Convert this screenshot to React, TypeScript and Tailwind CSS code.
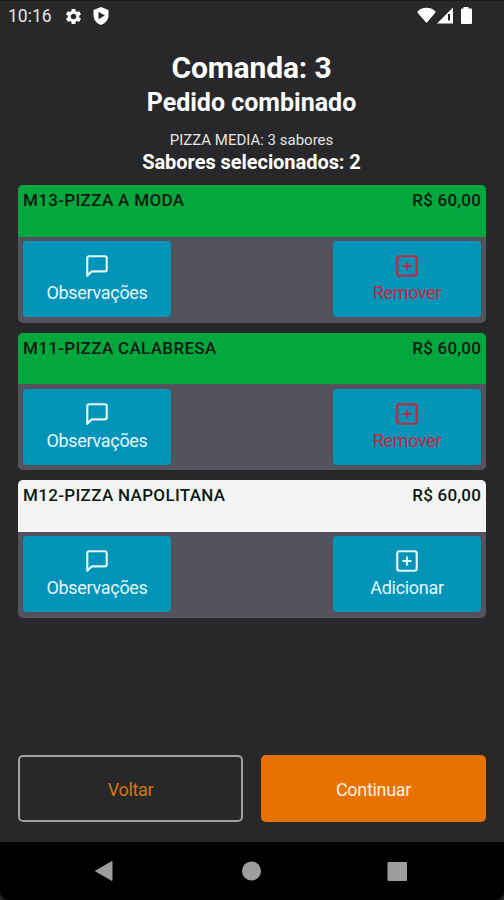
import React from 'react';

interface Flavor {
  id: number;
  name: string;
  price: string;
  selected: boolean;
}

const flavors: Flavor[] = [
  { id: 1, name: 'M13-PIZZA A MODA', price: 'R$ 60,00', selected: true },
  { id: 2, name: 'M11-PIZZA CALABRESA', price: 'R$ 60,00', selected: true },
  { id: 3, name: 'M12-PIZZA NAPOLITANA', price: 'R$ 60,00', selected: false },
];

const StatusBar: React.FC = () => (
  <div className="flex h-8 items-center justify-between border-t border-[#1b1b1c] pb-px pl-2 pr-[32px] text-white">
    <div className="flex items-center">
      <span className="w-[56px] text-[17.5px] leading-[30px] text-[#e4e4e4]">10:16</span>
      <svg className="h-[19px] w-[19px]" viewBox="0 0 24 24" fill="currentColor">
        <path d="M19.14 12.94c.04-.3.06-.61.06-.94 0-.32-.02-.64-.07-.94l2.03-1.58a.49.49 0 0 0 .12-.61l-1.92-3.32a.488.488 0 0 0-.59-.22l-2.39.96c-.5-.38-1.03-.7-1.62-.94l-.36-2.54a.484.484 0 0 0-.48-.41h-3.84c-.24 0-.43.17-.47.41l-.36 2.54c-.59.24-1.13.57-1.62.94l-2.39-.96c-.22-.08-.47 0-.59.22L2.74 8.87c-.12.21-.08.47.12.61l2.03 1.58c-.05.3-.09.63-.09.94s.02.64.07.94l-2.03 1.58a.49.49 0 0 0-.12.61l1.92 3.32c.12.22.37.29.59.22l2.39-.96c.5.38 1.03.7 1.62.94l.36 2.54c.05.24.24.41.48.41h3.84c.24 0 .44-.17.47-.41l.36-2.54c.59-.24 1.13-.56 1.62-.94l2.39.96c.22.08.47 0 .59-.22l1.92-3.32c.12-.22.07-.47-.12-.61l-2.01-1.58zM12 15.6c-1.98 0-3.6-1.62-3.6-3.6s1.62-3.6 3.6-3.6 3.6 1.62 3.6 3.6-1.62 3.6-3.6 3.6z" />
      </svg>
      <svg className="ml-[10px] h-[18px] w-4" viewBox="0 0 16 18" fill="currentColor" fillRule="evenodd">
        <path d="M8 0l7.5 3v5.5c0 4.3-3.2 8-7.5 9.5C3.7 16.5.5 12.8.5 8.5V3zM5.5 4.8v7.4L11.8 8.5z" />
      </svg>
    </div>
    <svg className="h-[18px] w-[56px]" viewBox="0 0 56 18" fill="currentColor">
      <path d="M2 4C6.5-.2 14.500-.2 19 4Q20 5 19 6L10.500 16 1.800 6Q1 5 2 4z" />
      <path d="M21 16.500L37 .5v16z" />
      <path d="M33 7v6.500" stroke="#28282a" strokeWidth="2" />
      <path d="M47.500 0h5v1.500H55a1 1 0 0 1 1 1V16a1 1 0 0 1-1 1H46a1 1 0 0 1-1-1V2.500a1 1 0 0 1 1-1h1.500z" />
    </svg>
  </div>
);

const MessageIcon: React.FC = () => (
  <svg className="h-[26px] w-[26px]" viewBox="0 0 24 24" fill="none" stroke="currentColor" strokeWidth="2" strokeLinecap="round" strokeLinejoin="round">
    <path d="M21 15a2 2 0 0 1-2 2H7l-4 4V5a2 2 0 0 1 2-2h14a2 2 0 0 1 2 2z" />
  </svg>
);

const PlusSquareIcon: React.FC = () => (
  <svg className="h-[26px] w-[26px]" viewBox="0 0 24 24" fill="none" stroke="currentColor" strokeWidth="2" strokeLinecap="round" strokeLinejoin="round">
    <rect x="3" y="3" width="18" height="18" rx="2" />
    <path d="M12 8.5v7M8.5 12h7" />
  </svg>
);

const FlavorCard: React.FC<{ flavor: Flavor }> = ({ flavor }) => {
  const button =
    'flex h-[76px] w-[148px] flex-col items-center rounded-[4px] bg-[#0094b8] pt-3 text-[18px] leading-[27px] tracking-[-0.3px]';

  return (
    <div className="h-[137.5px] overflow-hidden rounded-[5px] bg-[#53535d]">
      <div
        className={`flex h-[51.5px] justify-between px-[5px] pt-[3px] text-[17px] font-medium leading-6 text-[#0b1a10] ${
          flavor.selected ? 'bg-[#02a83d]' : 'bg-[#f4f4f4]'
        }`}
      >
        <span className="tracking-[0.33px]">{flavor.name}</span>
        <span className="tracking-[0.2px]">{flavor.price}</span>
      </div>
      <div className="flex justify-between px-[5px] pt-[4.5px]">
        <button className={`${button} text-[#e4f7fc]`}>
          <MessageIcon />
          Observações
        </button>
        <button className={`${button} ${flavor.selected ? 'text-[#c92440]' : 'text-[#e4f7fc]'}`}>
          <PlusSquareIcon />
          {flavor.selected ? 'Remover' : 'Adicionar'}
        </button>
      </div>
    </div>
  );
};

const App: React.FC = () => {
  return (
    <div className="flex h-[900px] w-[504px] flex-col bg-[#28282a] font-['Roboto',sans-serif]">
      <StatusBar />

      <header className="flex flex-col items-center pr-px pt-[18px] text-white">
        <h1 className="text-[30px] font-bold leading-9 tracking-[-0.15px]">Comanda: 3</h1>
        <h2 className="pt-px text-[25px] font-bold leading-8">Pedido combinado</h2>
        <p className="mt-[10px] text-[15px] leading-[22px] text-[#e4e4e4]">PIZZA MEDIA: 3 sabores</p>
        <p className="-mt-px text-[20px] font-bold leading-6 tracking-[-0.05px]">Sabores selecionados: 2</p>
      </header>

      <main className="flex flex-1 flex-col gap-[10px] px-[18px] pt-[11px]">
        {flavors.map((flavor) => (
          <FlavorCard key={flavor.id} flavor={flavor} />
        ))}
      </main>

      <footer className="flex justify-between px-[18px] pb-5 text-[18px] tracking-[-0.3px]">
        <button className="h-[67px] w-[225px] rounded-[5px] border-2 border-[#a1a1a4] pt-px text-[#d47808]">Voltar</button>
        <button className="h-[67px] w-[225px] rounded-[5px] bg-[#e87200] pt-px text-[#fff0e2]">Continuar</button>
      </footer>

      <div className="bg-[#28282a]">
        <nav className="h-[58px] rounded-b-lg bg-black">
          <svg className="h-[58px] w-[504px]" viewBox="0 0 504 58" fill="#9d9d9d">
            <path d="M95.5 29L112 19.5v19z" stroke="#9d9d9d" strokeLinejoin="round" />
            <circle cx="251.5" cy="29" r="9.5" />
            <rect x="387.5" y="20" width="19.5" height="19" rx="1" />
          </svg>
        </nav>
      </div>
    </div>
  );
};

export default App;
